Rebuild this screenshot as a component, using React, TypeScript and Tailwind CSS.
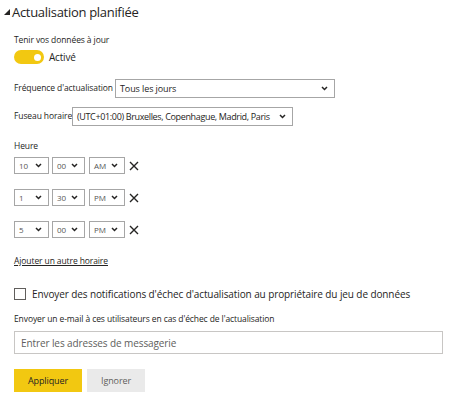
import React, { useState } from 'react';

const Chevron = () => (
  <svg width="7" height="5" viewBox="0 0 7 5" className="shrink-0">
    <path d="M1 1 L3.5 3.5 L6 1" fill="none" stroke="#252423" strokeWidth="1.5" />
  </svg>
);

const Select: React.FC<{ value: string; className?: string; small?: boolean }> = ({ value, className = '', small }) => (
  <div
    className={`flex items-center justify-between border border-[#a6a6a6] bg-white pl-[4px] pr-[6px] whitespace-nowrap ${
      small ? 'text-[8px] text-[#555]' : 'text-[9px] text-[#252423]'
    } ${className}`}
  >
    <span>{value}</span>
    <Chevron />
  </div>
);

const TimeRow: React.FC<{ h: string; m: string; p: string }> = ({ h, m, p }) => (
  <div className="flex items-center h-[17px]">
    <Select small value={h} className="w-[35px] h-[17px]" />
    <Select small value={m} className="w-[33px] h-[17px] ml-[3px]" />
    <Select small value={p} className="w-[36px] h-[17px] ml-[4px]" />
    <svg width="10" height="10" viewBox="0 0 10 10" className="ml-[4px]">
      <path d="M1 1 L9 9 M9 1 L1 9" stroke="#252423" strokeWidth="1.4" />
    </svg>
  </div>
);

export default function App() {
  const [on, setOn] = useState(true);
  const [notify, setNotify] = useState(false);

  return (
    <div
      className="w-[450px] h-[397px] bg-white text-[#252423] overflow-hidden"
      style={{ fontFamily: '"Open Sans", "Noto Sans", sans-serif' }}
    >
      {/* Header */}
      <div className="flex items-center h-[24px] pl-[4px]">
        <svg width="6" height="6" viewBox="0 0 6 6" className="mr-[2px]">
          <path d="M6 0 L6 6 L0 6 Z" fill="#252423" />
        </svg>
        <span className="text-[13px] leading-none tracking-[-0.3px] text-[#252423]">Actualisation planifiée</span>
      </div>

      <div className="pl-[14px]">
        <div className="mt-[10px] text-[8.5px] leading-[12px] tracking-[-0.1px]">Tenir vos données à jour</div>

        <div className="mt-[4px] flex items-center h-[14px]">
          <button
            onClick={() => setOn(!on)}
            className={`relative w-[30px] h-[14px] rounded-full ${on ? 'bg-[#f2c811]' : 'bg-[#c8c6c4]'}`}
          >
            <span
              className={`absolute top-[3.5px] w-[7px] h-[7px] rounded-full bg-white ${on ? 'left-[20px]' : 'left-[3px]'}`}
            />
          </button>
          <span className="ml-[5px] text-[10px] tracking-[-0.2px] leading-none">Activé</span>
        </div>

        <div className="mt-[15px] flex items-center h-[19px]">
          <span className="text-[8.5px] tracking-[-0.1px] w-[101px] whitespace-nowrap">Fréquence d'actualisation</span>
          <Select value="Tous les jours" className="w-[220px] h-[19px] tracking-[-0.1px]" />
        </div>

        <div className="mt-[9px] flex items-center h-[19px]">
          <span className="text-[8.5px] tracking-[-0.1px] w-[58px] whitespace-nowrap">Fuseau horaire</span>
          <Select
            value="(UTC+01:00) Bruxelles, Copenhague, Madrid, Paris"
            className="w-[221px] h-[19px] tracking-[-0.35px]"
          />
        </div>

        <div className="mt-[14px] text-[8.5px] leading-[12px] tracking-[-0.1px]">Heure</div>

        <div className="mt-[5px] flex flex-col gap-[15px]">
          <TimeRow h="10" m="00" p="AM" />
          <TimeRow h="1" m="30" p="PM" />
          <TimeRow h="5" m="00" p="PM" />
        </div>

        <div className="mt-[17px] text-[8.5px] leading-[12px] tracking-[-0.1px] underline">
          <a href="#">Ajouter un autre horaire</a>
        </div>

        <div className="mt-[20px] flex items-center h-[13px]">
          <button
            onClick={() => setNotify(!notify)}
            className="w-[12px] h-[12px] border border-[#605e5c] bg-white flex items-center justify-center"
          >
            {notify && (
              <svg width="9" height="9" viewBox="0 0 9 9">
                <path d="M1 4.5 L3.5 7 L8 1.5" fill="none" stroke="#252423" strokeWidth="1.2" />
              </svg>
            )}
          </button>
          <span className="ml-[6px] text-[10px] tracking-[-0.1px] leading-none whitespace-nowrap">
            Envoyer des notifications d'échec d'actualisation au propriétaire du jeu de données
          </span>
        </div>

        <div className="mt-[13px] text-[8.5px] leading-[12px] tracking-[-0.1px] whitespace-nowrap">
          Envoyer un e-mail à ces utilisateurs en cas d'échec de l'actualisation
        </div>

        <input
          placeholder="Entrer les adresses de messagerie"
          className="mt-[6px] block w-[429px] h-[23px] border border-[#c8c6c4] px-[6px] text-[10px] tracking-[-0.1px] placeholder:text-[#605e5c] outline-none"
        />

        <div className="mt-[15px] flex gap-[5px]">
          <button className="w-[68px] h-[23px] bg-[#f2c811] text-[9px] tracking-[-0.1px] text-[#252423]">Appliquer</button>
          <button className="w-[58px] h-[23px] bg-[#eaeaea] text-[9px] tracking-[-0.1px] text-[#605e5c]">Ignorer</button>
        </div>
      </div>
    </div>
  );
}
